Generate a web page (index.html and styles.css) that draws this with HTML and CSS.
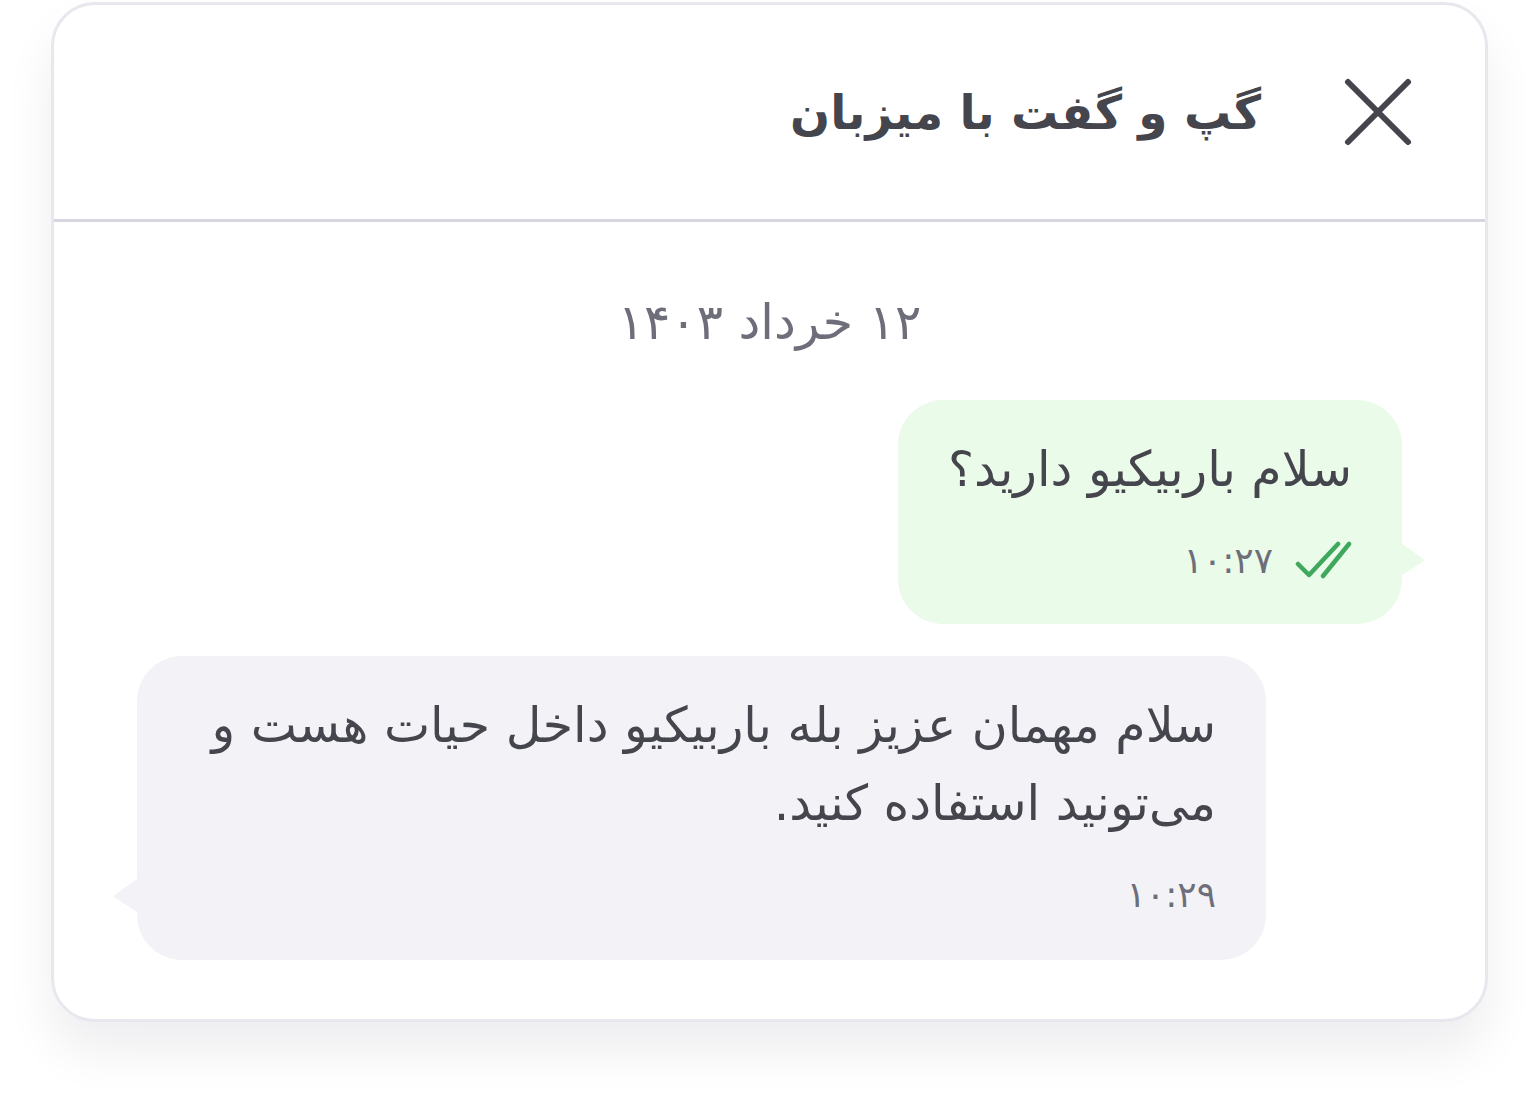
FILE: index.html
```
<!DOCTYPE html>
<html lang="fa" dir="rtl">

<head>
    <meta charset="utf-8">
    <title>گپ و گفت با میزبان</title>
    <link rel="stylesheet" href="styles.css">
</head>

<body>
    <div class="page">
        <!-- Chat window -->
        <div class="chat-card">
            <div class="chat-header">
                <button class="close-btn" type="button" aria-label="بستن">
                    <svg width="70" height="70" viewBox="0 0 70 70">
                        <path d="M5 5 L65 65 M65 5 L5 65" />
                    </svg>
                </button>
                <h1 class="chat-title">گپ و گفت با میزبان</h1>
            </div>

            <div class="chat-body">
                <div class="chat-date">۱۲ خرداد ۱۴۰۳</div>

                <!-- Guest message -->
                <div class="message message-out">
                    <p class="message-text">سلام باربیکیو دارید؟</p>
                    <div class="message-meta">
                        <svg class="read-icon" width="57" height="38" viewBox="0 0 57 38">
                            <path d="M3 23 L14 34 L43 3 M28 35 L54 3" />
                        </svg>
                        <span class="message-time">۱۰:۲۷</span>
                    </div>
                </div>

                <!-- Host message -->
                <div class="message message-in">
                    <p class="message-text">سلام مهمان عزیز بله باربیکیو داخل حیات هست و می‌تونید استفاده کنید.</p>
                    <div class="message-meta">
                        <span class="message-time">۱۰:۲۹</span>
                    </div>
                </div>
            </div>
        </div>
    </div>
</body>

</html>
```

FILE: styles.css
```
body {
    margin: 0;
    padding: 0;
    background-color: #ffffff;
    font-family: "DejaVu Sans", sans-serif;
    color: #45454d;
}

.page {
    padding: 2px 49px 100px 51px;
}

.chat-card {
    background-color: #ffffff;
    border: 3px solid #e7e7ed;
    border-radius: 44px;
    box-shadow: 0 30px 50px rgba(20, 20, 40, 0.07);
    overflow: hidden;
}

.chat-header {
    display: flex;
    align-items: center;
    gap: 82px;
    height: 214px;
    padding-right: 72px;
    border-bottom: 3px solid #d6d6e0;
}

.close-btn {
    display: flex;
    padding: 0;
    border: none;
    background: none;
    cursor: pointer;
}

.close-btn path {
    fill: none;
    stroke: #45454d;
    stroke-width: 6;
    stroke-linecap: round;
}

.chat-title {
    margin: 0;
    font-size: 47px;
    font-weight: bold;
    color: #45454d;
}

.chat-body {
    display: flex;
    flex-direction: column;
    align-items: flex-start;
    padding: 62px 83px 59px;
}

.chat-date {
    align-self: center;
    margin-bottom: 38px;
    font-size: 49px;
    line-height: 78px;
    color: #6e6e7a;
}

.message {
    position: relative;
    box-sizing: border-box;
    max-width: 1129px;
    padding: 31px 50px 39px;
    border-radius: 45px;
}

.message::after {
    content: "";
    position: absolute;
    bottom: 48px;
    width: 24px;
    height: 33px;
}

.message-out {
    background-color: #eafbe9;
}

.message-out::after {
    right: -23px;
    background-color: #eafbe9;
    clip-path: polygon(0 0, 100% 52%, 0 100%);
}

.message-in {
    align-self: flex-end;
    margin-top: 32px;
    padding-bottom: 41px;
    background-color: #f3f3f7;
}

.message-in::after {
    left: -24px;
    background-color: #f3f3f7;
    clip-path: polygon(100% 0, 0 52%, 100% 100%);
}

.message-text {
    margin: 0;
    font-size: 49px;
    line-height: 78px;
    color: #45454d;
}

.message-meta {
    display: flex;
    align-items: center;
    gap: 22px;
    height: 50px;
    margin-top: 26px;
}

.message-time {
    font-size: 36px;
    color: #6e6e7a;
}

.read-icon path {
    fill: none;
    stroke: #3fa85c;
    stroke-width: 4.5;
    stroke-linecap: round;
    stroke-linejoin: round;
}
```
